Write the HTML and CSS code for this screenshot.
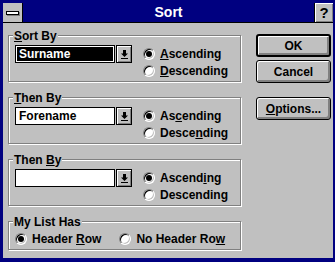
FILE: index.html
```html
<!DOCTYPE html>
<html lang="en">
<head>
  <meta charset="UTF-8">
  <title>Sort</title>
  <link rel="stylesheet" href="styles.css">
</head>
<body>
  <div class="window">
    <div class="titlebar">
      <div class="sysmenu"><span class="sysbar"></span></div>
      <div class="title">Sort</div>
      <div class="help">?</div>
    </div>

    <div class="content">
      <div class="groups">
        <div class="group">
          <div class="group-title"><u>S</u>ort By</div>
          <div class="group-body">
            <div class="combo">
              <div class="field selected"><span>Surname</span></div>
              <div class="drop"><svg width="7" height="9" viewBox="0 0 7 9"><path d="M2 0h3v3.5h2L3.5 7 0 3.5h2z"/><rect y="8" width="7" height="1"/></svg></div>
            </div>
            <div class="radios">
              <div class="radio"><span class="dot on"></span><span><u>A</u>scending</span></div>
              <div class="radio"><span class="dot"></span><span><u>D</u>escending</span></div>
            </div>
          </div>
        </div>

        <div class="group">
          <div class="group-title"><u>T</u>hen By</div>
          <div class="group-body">
            <div class="combo">
              <div class="field"><span>Forename</span></div>
              <div class="drop"><svg width="7" height="9" viewBox="0 0 7 9"><path d="M2 0h3v3.5h2L3.5 7 0 3.5h2z"/><rect y="8" width="7" height="1"/></svg></div>
            </div>
            <div class="radios">
              <div class="radio"><span class="dot on"></span><span>As<u>c</u>ending</span></div>
              <div class="radio"><span class="dot"></span><span>Desce<u>n</u>ding</span></div>
            </div>
          </div>
        </div>

        <div class="group">
          <div class="group-title">Then <u>B</u>y</div>
          <div class="group-body">
            <div class="combo">
              <div class="field"><span></span></div>
              <div class="drop"><svg width="7" height="9" viewBox="0 0 7 9"><path d="M2 0h3v3.5h2L3.5 7 0 3.5h2z"/><rect y="8" width="7" height="1"/></svg></div>
            </div>
            <div class="radios">
              <div class="radio"><span class="dot on"></span><span>Ascend<u>i</u>ng</span></div>
              <div class="radio"><span class="dot"></span><span>Descendin<u>g</u></span></div>
            </div>
          </div>
        </div>

        <div class="group small">
          <div class="group-title">My List Has</div>
          <div class="group-body row">
            <div class="radio"><span class="dot on"></span><span>Header <u>R</u>ow</span></div>
            <div class="radio"><span class="dot"></span><span>No Header Ro<u>w</u></span></div>
          </div>
        </div>
      </div>

      <div class="buttons">
        <div class="btn default">OK</div>
        <div class="btn">Cancel</div>
        <div class="btn options"><span><u>O</u>ptions...</span></div>
      </div>
    </div>
  </div>
</body>
</html>
```

FILE: styles.css
```css
body {
  margin: 0;
  background: #000080;
  font-family: "Liberation Sans", Arial, sans-serif;
  font-weight: bold;
  font-size: 12px;
  color: #000;
}

.window {
  margin: 3px 2px 0 3px;
  width: 330px;
  height: 255px;
  background: #c0c0c0;
}

/* Title bar */
.titlebar {
  display: flex;
  height: 19px;
  border-bottom: 1px solid #000;
}

.sysmenu {
  width: 19px;
  border-right: 1px solid #000;
  display: flex;
  align-items: center;
  justify-content: center;
}

.sysbar {
  width: 11px;
  height: 2px;
  background: #fff;
  border: 1px solid #000;
  box-shadow: 1px 1px #808080;
}

.title {
  flex: 1;
  background: #000080;
  color: #fff;
  text-align: center;
  font-size: 14px;
  line-height: 19px;
}

.help {
  width: 18px;
  border-left: 1px solid #000;
  box-shadow: inset 1px 1px #fff, inset -1px -1px #808080;
  text-align: center;
  font-size: 15px;
  line-height: 19px;
}

/* Body */
.content {
  display: flex;
  padding: 11px 0 0 5px;
}

.groups {
  width: 233px;
  margin-top: 1px;
  display: flex;
  flex-direction: column;
  gap: 15px;
}

.group {
  border: 1px solid #808080;
  box-shadow: inset 1px 1px #fff, 1px 1px #fff;
  padding: 0 5px 2px 6px;
}

.group-title {
  width: fit-content;
  margin: -7px 0 0 -2px;
  padding: 0 1px;
  line-height: 14px;
  background: #c0c0c0;
}

.group-body {
  display: flex;
  margin-top: 2px;
}

.group-body.row {
  margin-top: 1px;
  gap: 18px;
}

.combo {
  display: flex;
  width: 117px;
  height: 18px;
  margin-right: 11px;
}

.field {
  flex: 1;
  border: 1px solid #000;
  background: #fff;
  padding: 1px;
  line-height: 14px;
}

.field span {
  display: block;
  height: 100%;
  padding-left: 2px;
}

.field.selected span {
  background: #000;
  color: #fff;
}

.drop {
  width: 14px;
  margin-left: 1px;
  border: 1px solid #000;
  box-shadow: inset 1px 1px #fff, inset -1px -1px #808080;
  display: flex;
  align-items: center;
  justify-content: center;
}

.radios {
  display: flex;
  flex-direction: column;
}

.radio {
  display: flex;
  align-items: center;
  gap: 5px;
  height: 17px;
}

.dot {
  position: relative;
  width: 10px;
  height: 10px;
  border: 1px solid;
  border-color: #808080 #fff #fff #808080;
  border-radius: 50%;
  background: #fff;
  box-shadow: inset 1px 1px #000, inset -1px -1px #c0c0c0;
}

.dot.on::after {
  content: "";
  position: absolute;
  left: 2px;
  top: 2px;
  width: 6px;
  height: 6px;
  border-radius: 50%;
  background: #000;
}

/* Buttons */
.buttons {
  width: 75px;
  margin-left: 15px;
  display: flex;
  flex-direction: column;
  gap: 3px;
}

.btn {
  box-sizing: border-box;
  height: 23px;
  border: 1px solid #000;
  border-radius: 3px;
  box-shadow: inset 1px 1px #fff, inset -1px -1px #808080, inset -2px -2px #808080;
  display: flex;
  align-items: center;
  justify-content: center;
}

.btn.default {
  border-width: 2px;
}

.btn.options {
  margin-top: 11px;
}
```
